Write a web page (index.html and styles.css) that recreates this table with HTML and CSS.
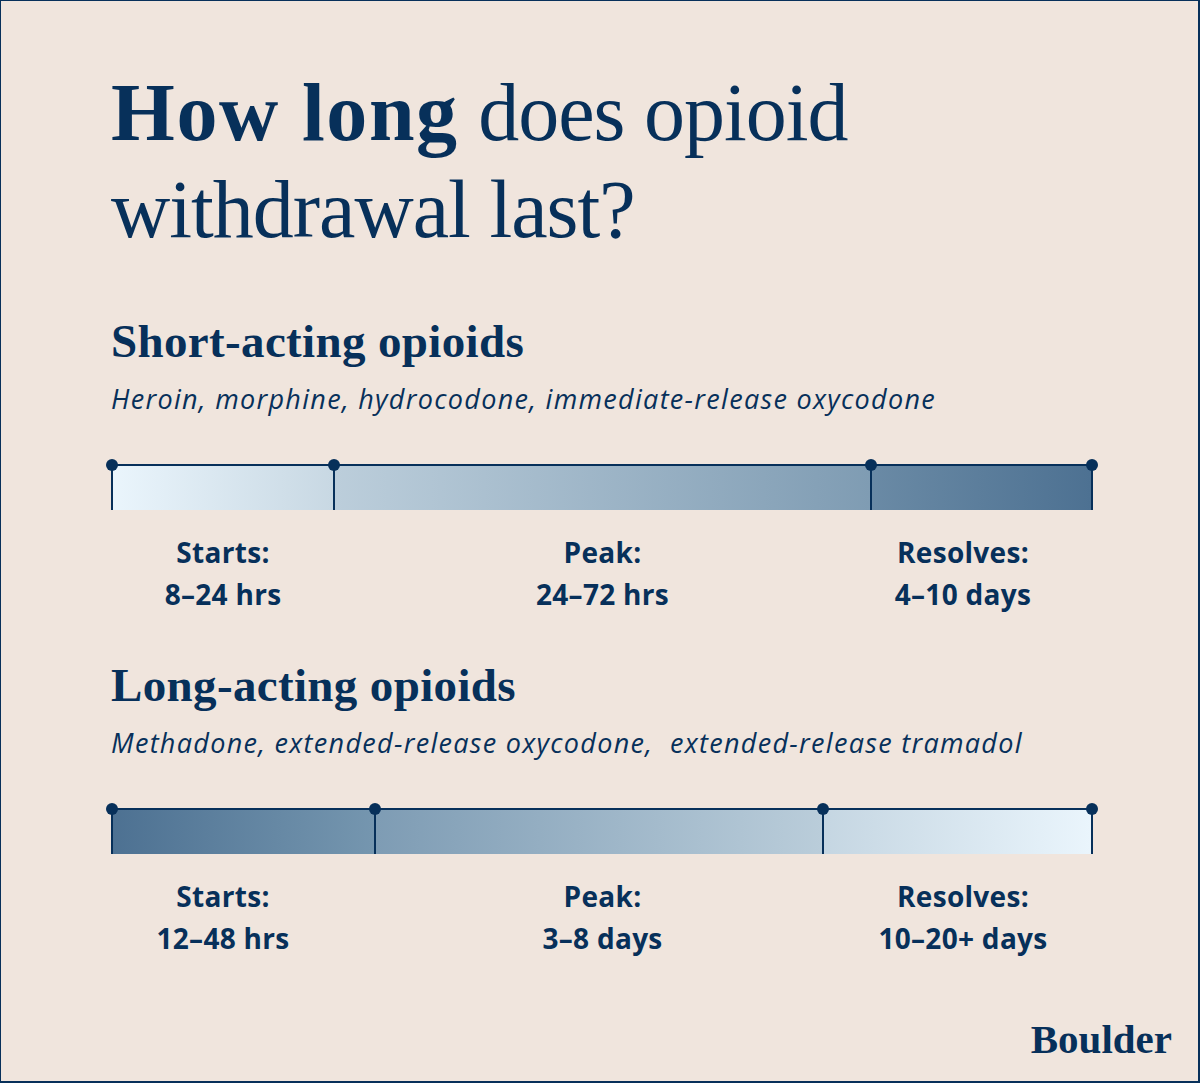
FILE: index.html
```html
<!DOCTYPE html>
<html lang="en">
<head>
<meta charset="utf-8">
<title>How long does opioid withdrawal last?</title>
<link rel="stylesheet" href="styles.css">
</head>
<body>
<div class="page">
  <h1 class="title"><strong>How long</strong> does opioid<br>withdrawal last?</h1>

  <section class="group">
    <h2 class="group-title">Short-acting opioids</h2>
    <p class="drugs">Heroin, morphine, hydrocodone, immediate-release oxycodone</p>
    <div class="bar bar-short">
      <div class="seg"></div>
      <div class="seg"></div>
      <div class="seg seg-last"></div>
    </div>
    <div class="labels">
      <div class="label"><span>Starts:</span><span>8–24 hrs</span></div>
      <div class="label"><span>Peak:</span><span>24–72 hrs</span></div>
      <div class="label"><span>Resolves:</span><span>4–10 days</span></div>
    </div>
  </section>

  <section class="group">
    <h2 class="group-title">Long-acting opioids</h2>
    <p class="drugs">Methadone, extended-release oxycodone,&nbsp; extended-release tramadol</p>
    <div class="bar bar-long">
      <div class="seg"></div>
      <div class="seg"></div>
      <div class="seg seg-last"></div>
    </div>
    <div class="labels">
      <div class="label"><span>Starts:</span><span>12–48 hrs</span></div>
      <div class="label"><span>Peak:</span><span>3–8 days</span></div>
      <div class="label"><span>Resolves:</span><span>10–20+ days</span></div>
    </div>
  </section>

  <div class="logo">Boulder</div>
</div>
</body>
</html>
```

FILE: styles.css
```css
* { box-sizing: border-box; }

html, body {
  margin: 0;
  padding: 0;
  background: #f0e5dd;
}

.page {
  width: 1200px;
  height: 1083px;
  background: #f0e5dd;
  border-style: solid;
  border-color: #07305a;
  border-width: 1px 2px 2px 1px;
  padding: 63px 26px 21px 110px;
  display: flex;
  flex-direction: column;
  color: #07305a;
}

.title {
  margin: 0;
  font-family: "Liberation Serif", "Times New Roman", serif;
  font-weight: 400;
  font-size: 82px;
  line-height: 97px;
  letter-spacing: -1px;
}

.title strong {
  font-weight: 700;
  letter-spacing: 1.6px;
}

.group {
  display: flex;
  flex-direction: column;
  margin-top: 55px;
}

.group + .group {
  margin-top: 42px;
}

.group-title {
  margin: 0;
  font-family: "Liberation Serif", "Times New Roman", serif;
  font-weight: 700;
  font-size: 47px;
  line-height: 56px;
  letter-spacing: 0.35px;
}

.drugs {
  margin: 12px 0 0;
  font-family: "Open Sans", "Noto Sans", sans-serif;
  font-style: italic;
  font-weight: 400;
  font-size: 27px;
  line-height: 36px;
  letter-spacing: 1.3px;
}

.bar {
  margin-top: 47px;
  display: grid;
  width: 982px;
  height: 46px;
  border-top: 2px solid #07305a;
}

.bar-short { grid-template-columns: 222px 537px 223px; }
.bar-long  { grid-template-columns: 263px 448px 271px; }

.seg {
  position: relative;
  border-left: 2px solid #07305a;
}

.seg::before,
.seg-last::after {
  content: "";
  position: absolute;
  top: -7px;
  width: 12px;
  height: 12px;
  border-radius: 50%;
  background: #07305a;
}

.seg::before { left: -7px; }
.seg-last::after { right: -7px; }

.seg-last { border-right: 2px solid #07305a; }

.bar-short .seg:nth-child(1) { background: linear-gradient(90deg, #eaf5fc, #c8d8e3); }
.bar-short .seg:nth-child(2) { background: linear-gradient(90deg, #bccedb, #7f9cb3); }
.bar-short .seg:nth-child(3) { background: linear-gradient(90deg, #6a8aa5, #4d7192); }

.bar-long .seg:nth-child(1) { background: linear-gradient(90deg, #4d7192, #7596af); }
.bar-long .seg:nth-child(2) { background: linear-gradient(90deg, #7e9cb4, #bacdda); }
.bar-long .seg:nth-child(3) { background: linear-gradient(90deg, #c5d6e2, #eaf5fc); }

.labels {
  margin-top: 21px;
  margin-left: 1px;
  display: grid;
  grid-template-columns: 222px 537px 184px;
}

.label {
  display: flex;
  flex-direction: column;
  align-items: center;
  font-family: "Open Sans", "Noto Sans", sans-serif;
  font-weight: 700;
  font-size: 28px;
  line-height: 42px;
  letter-spacing: 0.3px;
  white-space: nowrap;
}

.logo {
  margin-top: auto;
  align-self: flex-end;
  font-family: "Liberation Serif", "Times New Roman", serif;
  font-weight: 700;
  font-size: 41px;
  line-height: 41px;
}
```
